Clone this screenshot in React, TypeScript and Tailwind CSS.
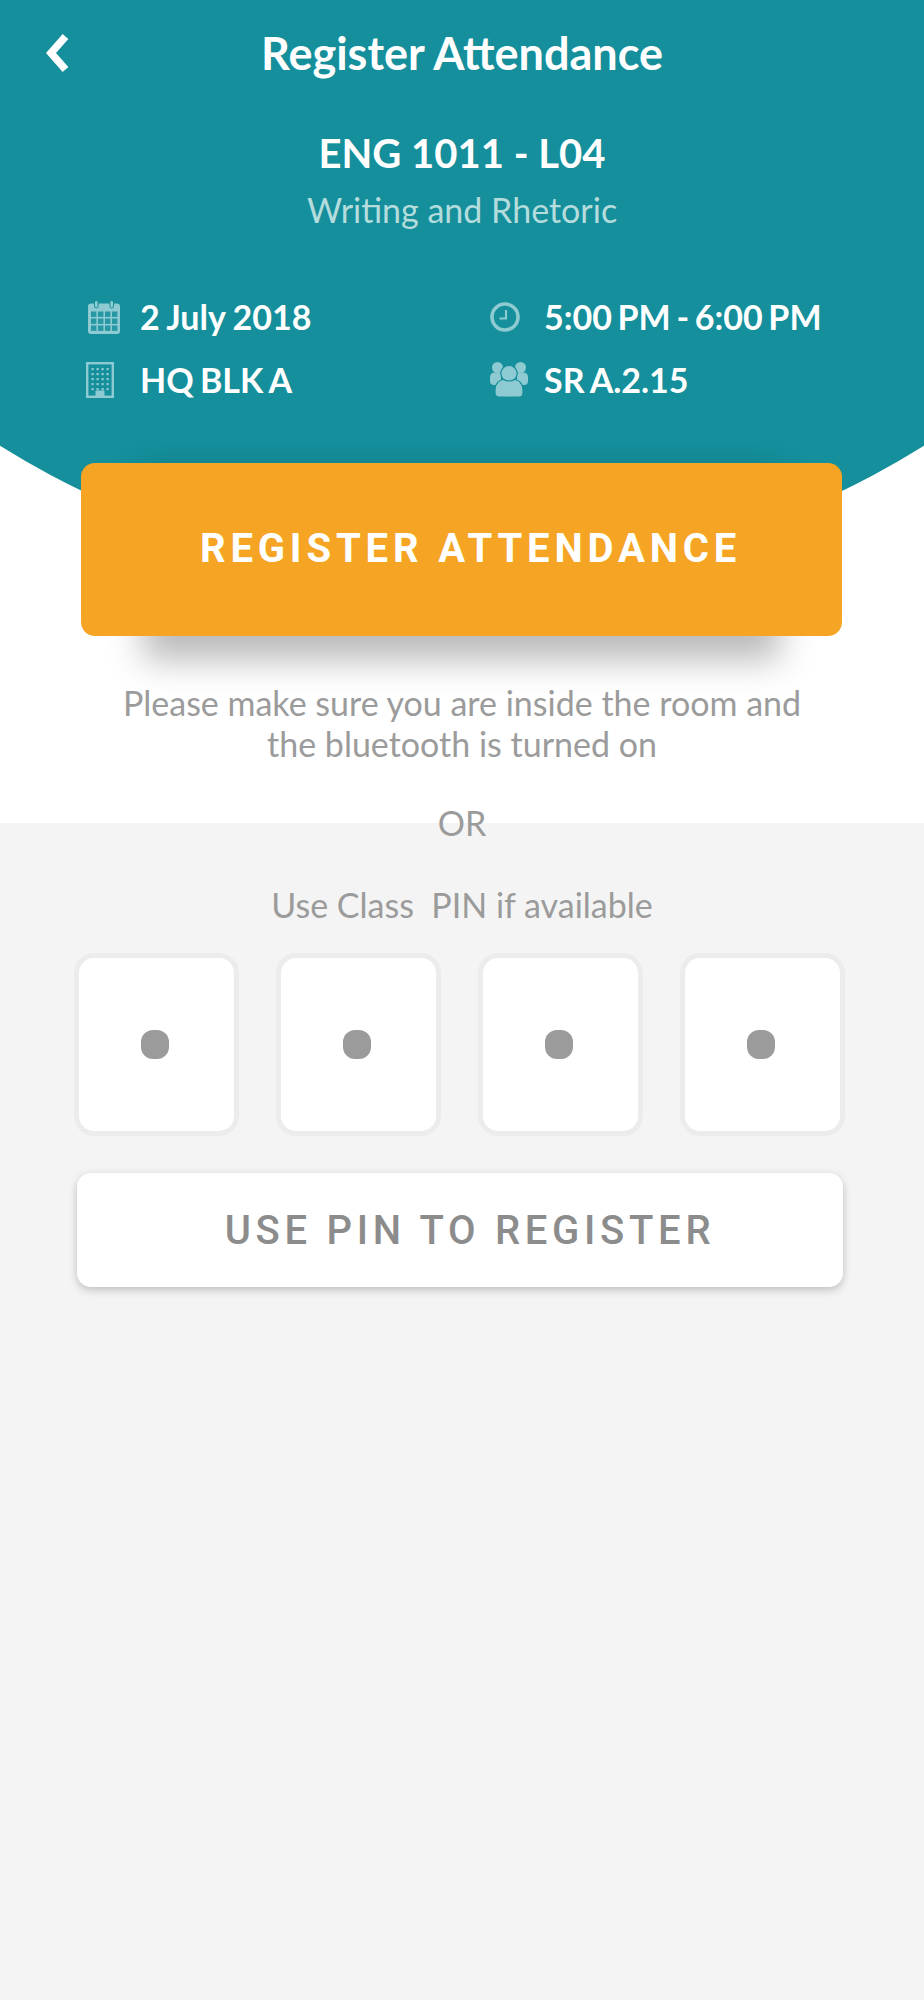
import React from "react";

const lato = "font-['Lato','Liberation_Sans',sans-serif]";
const roboto = "font-['Roboto','Liberation_Sans',sans-serif]";
const ic = "#8ecad1";
const teal = "#148f9b";

function Chevron() {
  return (
    <svg width="26" height="40" viewBox="0 0 26 40" className="block">
      <path d="M20.5 3.5 L6 20 L20.5 36.5" fill="none" stroke="#ffffff" strokeWidth="7.5" strokeLinejoin="miter" />
    </svg>
  );
}

function CalendarIcon() {
  const cells: React.ReactElement[] = [];
  for (let r = 0; r < 3; r++) {
    for (let k = 0; k < 4; k++) {
      cells.push(<rect key={`${r}-${k}`} x={3 + k * 7} y={11.5 + r * 7} width="5.4" height="5.4" fill={teal} opacity="0.85" />);
    }
  }
  return (
    <svg width="32" height="34" viewBox="0 0 32 34" className="block">
      <rect x="0" y="3.5" width="32" height="30.5" rx="3" fill={ic} />
      {cells}
      <rect x="6.5" y="0.5" width="3.6" height="7.5" rx="1.8" fill={ic} stroke={teal} strokeWidth="1" />
      <rect x="21.9" y="0.5" width="3.6" height="7.5" rx="1.8" fill={ic} stroke={teal} strokeWidth="1" />
    </svg>
  );
}

function BuildingIcon() {
  const dots: React.ReactElement[] = [];
  for (let r = 0; r < 5; r++) {
    for (let k = 0; k < 4; k++) {
      dots.push(<rect key={`${r}-${k}`} x={5.5 + k * 5} y={6 + r * 5} width="2.2" height="2.2" fill={ic} />);
    }
  }
  return (
    <svg width="28" height="36" viewBox="0 0 28 36" className="block">
      <rect x="1.2" y="1.2" width="25.6" height="33.6" fill="none" stroke={ic} strokeWidth="2.4" />
      {dots}
      <rect x="9.5" y="28.5" width="9" height="7" fill={ic} />
    </svg>
  );
}

function ClockIcon() {
  return (
    <svg width="30" height="30" viewBox="0 0 30 30" className="block">
      <circle cx="15" cy="15" r="13" fill="none" stroke={ic} strokeWidth="3.6" />
      <path d="M16 8 V16.5 H9.5" fill="none" stroke={ic} strokeWidth="2.2" />
    </svg>
  );
}

function PeopleIcon() {
  return (
    <svg width="38" height="35" viewBox="0 0 38 35" className="block">
      <circle cx="7.5" cy="5.5" r="5.5" fill={ic} />
      <circle cx="30.5" cy="5.5" r="5.5" fill={ic} />
      <path d="M0 15 C0 12 2 10.5 4.5 10.5 H11 V23 H4 C1.5 23 0 21.5 0 19 Z" fill={ic} />
      <path d="M38 15 C38 12 36 10.5 33.5 10.5 H27 V23 H34 C36.5 23 38 21.5 38 19 Z" fill={ic} />
      <circle cx="19" cy="11.5" r="8.2" fill={ic} stroke={teal} strokeWidth="1.2" />
      <path d="M5 28 C5 21 10 17.5 14 17.5 C16 19.5 22 19.5 24 17.5 C28 17.5 33 21 33 28 V31 C33 33.5 31.5 35 29 35 H9 C6.5 35 5 33.5 5 31 Z" fill={ic} stroke={teal} strokeWidth="1.2" />
    </svg>
  );
}

function InfoRow({ icon, text, iconW, gap, ws }: { icon: React.ReactNode; text: string; iconW: string; gap: string; ws: string }) {
  return (
    <div className={`flex items-center h-[63px] ${gap}`}>
      <div className={`flex justify-center ${iconW}`}>{icon}</div>
      <span className={`text-[34px] leading-[40px] font-bold text-white whitespace-nowrap ${ws}`}>{text}</span>
    </div>
  );
}

function PinBox() {
  return (
    <div className="w-[165px] h-[183px] bg-white border-[5px] border-[#ececec] rounded-[20px] flex items-center justify-center pr-[3px]">
      <div className="w-[28px] h-[29px] bg-[#9b9b9b] rounded-[12px]" />
    </div>
  );
}

export default function App() {
  return (
    <div className={`w-[924px] h-[2000px] overflow-hidden bg-[#f4f4f4] ${lato}`}>
      <div className="bg-white h-[823px]">
        <div className="h-[578px] bg-[#148f9b] [clip-path:circle(873px_at_462px_-295px)]">
          <div className="relative h-[108px] flex items-center justify-center pb-[2px]">
            <div className="absolute left-[45px] top-[33px]">
              <Chevron />
            </div>
            <h1 className="text-[45px] leading-[50px] font-bold text-white">Register Attendance</h1>
          </div>
          <div className="mt-[20px] text-center text-[40px] leading-[50px] font-bold text-white">ENG 1011 - L04</div>
          <div className="mt-[12px] text-center text-[34px] leading-[40px] text-[#b4dcdd]">Writing and Rhetoric</div>
          <div className="mt-[55px] flex">
            <div className="ml-[85px] w-[405px]">
              <InfoRow icon={<CalendarIcon />} text="2 July 2018" iconW="w-[37px]" gap="gap-[18px]" ws="[word-spacing:-0.8px]" />
              <InfoRow icon={<BuildingIcon />} text="HQ BLK A" iconW="w-[30px]" gap="gap-[25px]" ws="[word-spacing:-2px]" />
            </div>
            <div>
              <InfoRow icon={<ClockIcon />} text="5:00 PM - 6:00 PM" iconW="w-[30px]" gap="gap-[24px]" ws="[word-spacing:-2.6px]" />
              <InfoRow icon={<PeopleIcon />} text="SR A.2.15" iconW="w-[38px]" gap="gap-[16px]" ws="[word-spacing:-2px]" />
            </div>
          </div>
        </div>

        <div className="relative mx-[81px] w-[761px] h-[173px] -mt-[115px]">
          <div className="absolute left-[62px] right-[62px] top-[13px] -bottom-[24px] bg-black/[0.27] blur-[17px]" />
          <button className={`relative w-full h-full bg-[#f5a523] rounded-[14px] pl-[18px] pb-[2px] text-[40px] font-bold tracking-[4.85px] text-white ${roboto}`}>
            REGISTER ATTENDANCE
          </button>
        </div>

        <p className="relative mt-[46px] text-center text-[34px] leading-[41px] text-[#9b9b9b]">
          Please make sure you are inside the room and
          <br />
          the bluetooth is turned on
        </p>
      </div>

      <div className="-mt-[20px] relative text-center text-[34px] leading-[40px] text-[#9b9b9b]">OR</div>
      <div className="mt-[42px] text-center text-[34px] leading-[40px] text-[#9b9b9b] whitespace-pre">Use Class  PIN if available</div>

      <div className="mt-[28px] ml-[74px] flex justify-between w-[771px]">
        <PinBox />
        <PinBox />
        <PinBox />
        <PinBox />
      </div>

      <button className={`block mt-[37px] ml-[77px] w-[766px] h-[114px] bg-white rounded-[14px] pl-[20px] pt-[2px] text-[40px] font-medium tracking-[4.7px] text-[#8c8c8c] shadow-[0_3px_8px_rgba(0,0,0,0.22)] ${roboto}`}>
        USE PIN TO REGISTER
      </button>
    </div>
  );
}
